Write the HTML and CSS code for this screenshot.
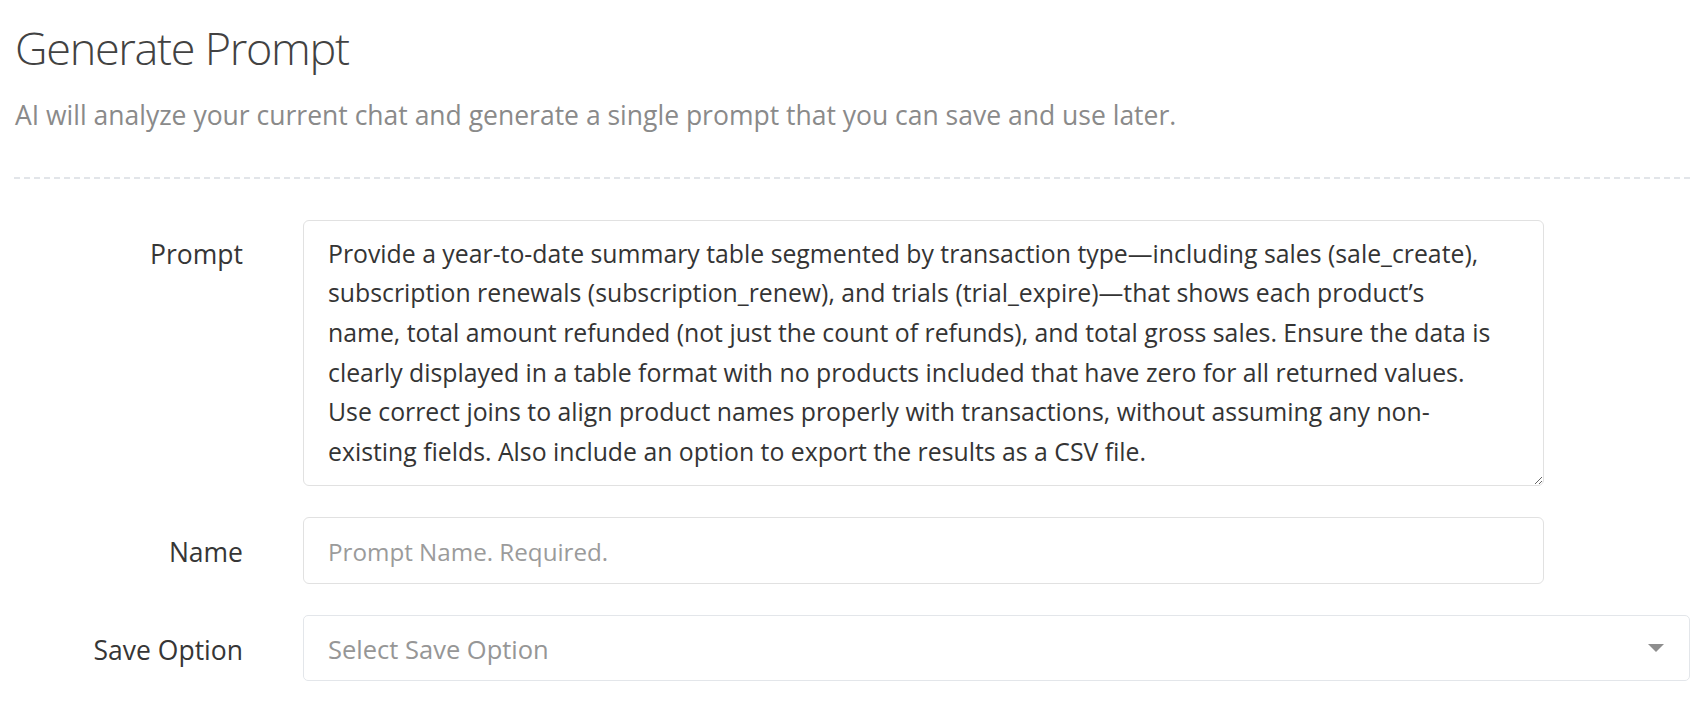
FILE: index.html
```html
<!DOCTYPE html>
<html lang="en">
<head>
  <meta charset="UTF-8">
  <meta name="viewport" content="width=device-width, initial-scale=1.0">
  <title>Generate Prompt</title>
  <link rel="stylesheet" href="styles.css">
</head>
<body>
  <div class="page">
    <h1 class="title">Generate Prompt</h1>
    <p class="subtitle">AI will analyze your current chat and generate a single prompt that you can save and use later.</p>
    <div class="divider"></div>

    <form class="prompt-form">
      <label class="field-label label-top" for="prompt">Prompt</label>
      <div class="control">
        <textarea class="prompt-text" id="prompt">Provide a year-to-date summary table segmented by transaction type—including sales (sale_create),
subscription renewals (subscription_renew), and trials (trial_expire)—that shows each product’s
name, total amount refunded (not just the count of refunds), and total gross sales. Ensure the data is
clearly displayed in a table format with no products included that have zero for all returned values.
Use correct joins to align product names properly with transactions, without assuming any non-
existing fields. Also include an option to export the results as a CSV file.</textarea>
      </div>

      <label class="field-label" for="promptName">Name</label>
      <div class="control">
        <input class="name-input" id="promptName" type="text" placeholder="Prompt Name. Required.">
      </div>

      <label class="field-label" for="saveOption">Save Option</label>
      <div class="control select-wrap">
        <select class="save-select" id="saveOption">
          <option value="" selected>Select Save Option</option>
          <option value="personal">Personal</option>
          <option value="team">Team</option>
        </select>
        <!-- dropdown caret -->
        <svg class="caret" width="16" height="8" viewBox="0 0 16 8"><path d="M0 0H16L8 8Z" fill="#8e8e8e"/></svg>
      </div>
    </form>
  </div>
</body>
</html>
```

FILE: styles.css
```css
body{
  margin: 0;
  background-color: white;
  font-family: "Open Sans", "Noto Sans", sans-serif;
  color: #333;
}
.page{
  padding: 21px 18px 0 14px;
}
.title{
  margin: 0 0 0 1px;
  font-size: 45px;
  font-weight: 300;
  line-height: 54px;
  letter-spacing: -1.3px;
  color: #424242;
}
.subtitle{
  margin: 21px 0 0 1px;
  font-size: 26.5px;
  line-height: 39.75px;
  color: #8a8a8a;
}
.divider{
  margin-top: 41px;
  height: 2px;
  background: repeating-linear-gradient(to right, #e2e5e9 0 6px, transparent 6px 10px);
}
.prompt-form{
  margin-top: 41px;
  display: grid;
  grid-template-columns: 229px 1fr;
  column-gap: 60px;
  row-gap: 31px;
}
.field-label{
  align-self: center;
  text-align: right;
  font-size: 26.5px;
  line-height: 39.6px;
  padding-top: 6px;
  color: #363636;
}
.label-top{
  align-self: start;
  padding-top: 15px;
}
.control{
  display: flex;
}
.prompt-text{
  box-sizing: border-box;
  width: 1241px;
  height: 266px;
  padding: 13px 24px;
  border: 1px solid #e1e1e1;
  border-radius: 6px;
  font-family: inherit;
  font-size: 24.8px;
  line-height: 39.6px;
  color: #343434;
  white-space: pre;
  overflow: hidden;
  outline: none;
}
.name-input{
  box-sizing: border-box;
  width: 1241px;
  height: 67px;
  padding: 3px 24px 0;
  border: 1px solid #e1e1e1;
  border-radius: 6px;
  font-family: inherit;
  font-size: 24.2px;
  color: #363636;
  outline: none;
}
.name-input::placeholder{
  color: #9b9b9b;
}
.select-wrap{
  position: relative;
}
.save-select{
  box-sizing: border-box;
  width: 100%;
  height: 66px;
  padding: 2px 24px 0;
  border: 1px solid #e3e6ea;
  border-radius: 5px;
  background-color: white;
  appearance: none;
  -webkit-appearance: none;
  font-family: inherit;
  font-size: 25.5px;
  color: #969696;
  outline: none;
}
.caret{
  position: absolute;
  right: 26px;
  top: 29px;
  pointer-events: none;
}
```
